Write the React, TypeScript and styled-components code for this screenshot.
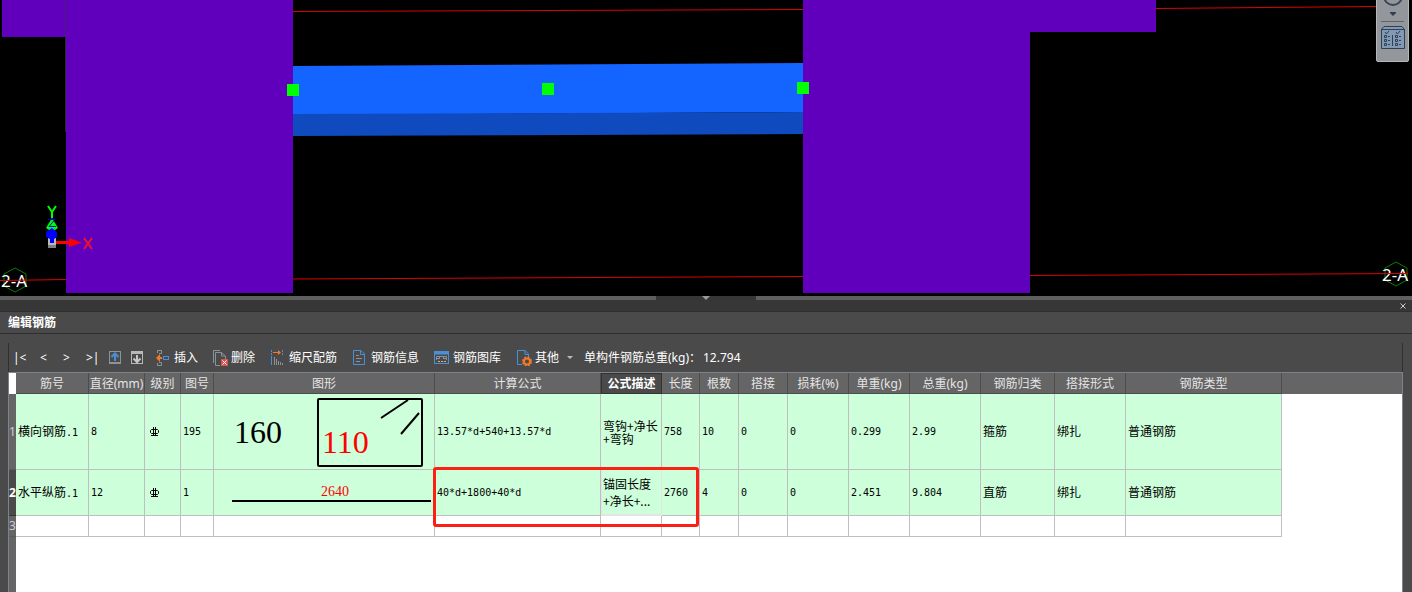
import React from 'react';
import styled, { createGlobalStyle, css } from 'styled-components';

const ui = '"Noto Sans", "Noto Sans CJK SC", sans-serif';
const cjk = '"Noto Sans CJK SC", sans-serif';
const mono = '"DejaVu Sans Mono", "Noto Sans CJK SC", monospace';
const serif = '"Liberation Serif", serif';

const GlobalStyle = createGlobalStyle`
  *, *::before, *::after { box-sizing: border-box; }
  body { margin: 0; background: #4a4a4a; font-family: ${ui}; font-size: 12px; }
  button { font: inherit; color: inherit; background: none; border: 0; padding: 0; cursor: pointer; }
`;

const Shell = styled.div`
  display: flex;
  flex-direction: column;
  min-height: 100vh;
  overflow: hidden;
`;

const Viewport = styled.section`
  position: relative;
  height: 296px;
  background: #000;
  overflow: hidden;
`;

const Scene = styled.svg`
  display: block;
  width: 100%;
  height: 100%;
`;

const NavBar = styled.nav`
  position: absolute;
  top: -60px;
  right: 3px;
  width: 33px;
  height: 122px;
  padding-top: 46px;
  display: flex;
  flex-direction: column;
  align-items: center;
  background: #93979c;
  border: 1px solid #b4b8bb;
  border-radius: 2px;
`;

const NavButton = styled.button<{ $h: number }>`
  display: flex;
  height: ${p => p.$h}px;
  align-items: center;
`;

const NavRule = styled.hr`
  width: 23px;
  height: 1px;
  margin: 0 0 4px;
  border: 0;
  background: #5f6266;
`;

const Splitter = styled.div`
  height: 4px;
  display: flex;
  background: #5f5f5f;
`;

const SplitterGrip = styled.button`
  width: 100px;
  height: 4px;
  margin: 0 auto;
  display: flex;
  justify-content: center;
  background: #363636;
`;

const DockBar = styled.div`
  height: 12px;
  display: flex;
  justify-content: flex-end;
  align-items: center;
  padding-right: 6px;
  background: #373737;
  border-bottom: 1px solid #2f2f2f;
`;

const CloseButton = styled.button`
  display: flex;
`;

const PanelTitle = styled.h2`
  height: 22px;
  margin: 0;
  padding-left: 8px;
  font: 700 12px/20px ${cjk};
  color: #fff;
  border-bottom: 1px solid #2f2f2f;
`;

const PanelBody = styled.div`
  flex: 1;
  display: flex;
  flex-direction: column;
  margin: 9px 9px 0 8px;
`;

const Toolbar = styled.div`
  height: 29px;
  display: flex;
  align-items: center;
  padding-left: 4px;
  border-left: 1px solid #303030;
  border-right: 1px solid #303030;
  color: #fff;
  line-height: 16px;
  white-space: nowrap;
`;

const StepButton = styled.button<{ $w: number }>`
  display: flex;
  width: ${p => p.$w}px;
`;

const ToolButton = styled.button<{ $w: number }>`
  width: ${p => p.$w}px;
  display: flex;
  align-items: center;
  gap: 3px;
`;

const Total = styled.output`
  display: flex;
  gap: 2px;
`;

const GridArea = styled.div`
  position: relative;
  flex: 1;
  background: linear-gradient(to right, #656565 7px, #fff 7px);
  border: 1px solid #7d838d;
  border-bottom: 0;
  overflow: hidden;
`;

const Grid = styled.table`
  width: 100%;
  table-layout: fixed;
  border-collapse: separate;
  border-spacing: 0;
`;

const Head = styled.th<{ $active?: boolean }>`
  height: 21px;
  padding: 1px 0 0;
  background: #656565;
  border-right: 1px solid #4c4c4c;
  border-bottom: 1px solid #4c4c4c;
  color: #e4e4e4;
  font: 400 12px/17px ${ui};
  white-space: nowrap;
  text-align: center;
  overflow: hidden;
  ${p => p.$active && css`
    padding: 0;
    background: #4a4a4a;
    border: 1px solid #333;
    color: #fff;
    font-weight: 700;
  `}
`;

const HeadRest = styled(Head)`
  border-right: 0;
  border-bottom-color: #656565;
`;

const Corner = styled.td`
  padding: 0;
  background: #fff;
`;

const RowNumber = styled.th<{ $active?: boolean }>`
  padding: 0;
  background: ${p => (p.$active ? '#4a4a4a' : '#656565')};
  color: ${p => (p.$active ? '#fff' : '#c4d0e0')};
  font: ${p => (p.$active ? 700 : 400)} 12px/16px ${ui};
  text-align: center;
  border-bottom: 1px solid ${p => (p.$active ? '#333' : '#5a5a5a')};
`;

const Row = styled.tr<{ $h: number }>`
  height: ${p => p.$h}px;
`;

const Cell = styled.td<{ $filled: boolean; $picture?: boolean; $focus?: boolean }>`
  padding: ${p => (p.$picture ? '0' : '0 0 0 2px')};
  background: ${p => (p.$filled ? '#ccffda' : '#fff')};
  border-right: 1px solid #bfbfbf;
  border-bottom: 1px solid #bfbfbf;
  color: #000;
  font: 10px/12px ${mono};
  white-space: nowrap;
  overflow: hidden;
  ${p => p.$focus && css`
    padding-left: 1px;
    border-left: 1px solid #e4e4e4;
    border-right: 1px solid #e4e4e4;
    border-bottom: 2px solid #e4e4e4;
  `}
`;

const Han = styled.span`
  font: 12px/12px ${cjk};
`;

const Lines = styled.div<{ $lh: number }>`
  font: 12px/${p => p.$lh}px ${cjk};
`;

const Shape = styled.svg`
  display: block;
`;

const Highlight = styled.div`
  position: absolute;
  left: 424px;
  top: 94px;
  width: 266px;
  height: 60px;
  border: 3px solid #fc2014;
  border-radius: 3px;
  pointer-events: none;
`;

const columns: [string, number][] = [
  ['筋号', 73], ['直径(mm)', 56], ['级别', 36], ['图号', 33], ['图形', 221], ['计算公式', 166],
  ['公式描述', 61], ['长度', 38], ['根数', 39], ['搭接', 49], ['损耗(%)', 61], ['单重(kg)', 61],
  ['总重(kg)', 71], ['钢筋归类', 74], ['搭接形式', 71], ['钢筋类型', 156],
];

const Grade = () => (
  <Shape width="16" height="12" viewBox="0 0 16 12" stroke="#000" fill="none" aria-label="HRB400" role="img">
    <path d="M4.500 3.500H10.500L11.500 4.500V6.500L10.500 7.500H4.500L3.500 6.500V4.500ZM6.500 1V10M8.500 1V10M4 9.500H11" />
  </Shape>
);

const StirrupShape = () => (
  <Shape width="220" height="75" viewBox="214 394 220 75" fill="none" stroke="#000" strokeWidth="2">
    <rect x="318" y="399" width="104" height="67" rx="1" />
    <path d="M381 418L408 400M401 434L419 413" />
    <text x="234" y="443" fontFamily={serif} fontSize="32" fill="#000" stroke="none">160</text>
    <text x="322" y="453" fontFamily={serif} fontSize="32" fill="#f00" stroke="none">110</text>
  </Shape>
);

const StraightShape = () => (
  <Shape width="220" height="45" viewBox="214 470 220 45" fill="none">
    <path d="M232 501H431" stroke="#000" strokeWidth="2" />
    <text x="321" y="496" fontFamily={serif} fontSize="14" fill="#f00">2640</text>
  </Shape>
);

const rows: { h: number; active?: boolean; cells: React.ReactNode[] }[] = [
  {
    h: 76,
    cells: [
      <><Han>横向钢筋</Han>.1</>, '8', <Grade />, '195', <StirrupShape />, '13.57*d+540+13.57*d',
      <Lines $lh={13}>弯钩+净长<br />+弯钩</Lines>, '758', '10', '0', '0', '0.299', '2.99',
      <Han>箍筋</Han>, <Han>绑扎</Han>, <Han>普通钢筋</Han>,
    ],
  },
  {
    h: 46,
    active: true,
    cells: [
      <><Han>水平纵筋</Han>.1</>, '12', <Grade />, '1', <StraightShape />, '40*d+1800+40*d',
      <Lines $lh={17}>锚固长度<br />+净长+...</Lines>, '2760', '4', '0', '0', '2.451', '9.804',
      <Han>直筋</Han>, <Han>绑扎</Han>, <Han>普通钢筋</Han>,
    ],
  },
  { h: 21, cells: columns.map(() => '') },
];

const Icon = ({ children }: { children: React.ReactNode }) => (
  <svg width="16" height="16" viewBox="0 0 16 16" fill="none" strokeWidth="1" aria-hidden="true">{children}</svg>
);

const BLUE = '#4a90d9';
const GREY = '#8a939b';
const ORANGE = '#f0792b';

const UpIcon = () => (
  <Icon>
    <rect x="2.500" y="1.500" width="11" height="12" stroke={GREY} />
    <path d="M2 13H14" stroke={GREY} strokeWidth="2" />
    <path d="M8 3V11M4.500 7L8 3.500L11.500 7" stroke={BLUE} strokeWidth="2" />
  </Icon>
);
const DownIcon = () => (
  <Icon>
    <rect x="2.500" y="1.500" width="11" height="12" stroke="#b8b8b8" />
    <path d="M2 2.500H14" stroke="#b8b8b8" strokeWidth="3" />
    <path d="M8 5V12M4.500 8.500L8 12L11.500 8.500" stroke="#c8c8c8" strokeWidth="2" />
  </Icon>
);
const InsertIcon = () => (
  <Icon>
    <path d="M2.500 3V.500H6.500V3.500H4M2.500 13V15.500H6.500V12.500H4" stroke={GREY} />
    <path d="M1 8L5 4V12ZM4 7H7V9H4Z" fill={ORANGE} />
    <rect x="8.500" y="6.500" width="5" height="3" stroke={BLUE} />
  </Icon>
);
const DeleteIcon = () => (
  <Icon>
    <path d="M1.500 13V.500H8M8 15.500H3.500V2.500H9.500L13.500 6V9M9.500 2.500V6H13" stroke={GREY} />
    <rect x="9" y="9" width="7" height="7" fill="#d9534f" />
    <path d="M10.500 10.500L14.500 14.500M14.500 10.500L10.500 14.500" stroke="#fff" />
  </Icon>
);
const ScaleIcon = () => (
  <Icon>
    <path d="M1.500 0V5M12.500 0V5" stroke={BLUE} strokeDasharray="2 1" />
    <path d="M3 2.500H9" stroke={ORANGE} />
    <path d="M8 0V5L11 2.500Z" fill={ORANGE} />
    <path d="M1.500 6V15" stroke={BLUE} />
    <path d="M4.500 7V15M6.500 9V15M8.500 11V15M10.500 12V15M12.500 13V15" stroke={GREY} />
  </Icon>
);
const InfoIcon = () => (
  <Icon>
    <path d="M1.500 .500H9L12.500 4V14.500H1.500ZM8.500 .500V4.500H12.500" stroke={BLUE} />
    <path d="M4 5.500H7M4 8.500H10M4 11.500H8" stroke={GREY} />
  </Icon>
);
const LibraryIcon = () => (
  <Icon>
    <rect x=".500" y="1.500" width="14" height="12" stroke={BLUE} />
    <path d="M0 3H15" stroke={BLUE} strokeWidth="3" />
    <path d="M2.500 10V6.500H12.500V10M3 8.500H6M9 8.500H12M5.500 6V9M9.500 6V9" stroke={GREY} />
    <path d="M4 11.500H13" stroke="#e0b080" strokeDasharray="2 1" />
  </Icon>
);
const OtherIcon = () => (
  <Icon>
    <path d="M6 14.500H1.500V.500H9L12.500 4V7M9 .500V4.500H12" stroke={BLUE} />
    <circle cx="11" cy="11.500" r="3" stroke={ORANGE} strokeWidth="2" />
    <circle cx="11" cy="11.500" r="4" stroke={ORANGE} strokeWidth="2" strokeDasharray="2 1.140" />
  </Icon>
);

const GreenHandle = ({ x, y }: { x: number; y: number }) => (
  <rect x={x} y={y} width="12" height="12" fill="#0f0" />
);

const AxisMark = ({ x, y }: { x: number; y: number }) => (
  <path d={`M${x} ${y - 12}L${x + 11} ${y - 6}V${y + 6}L${x} ${y + 12}L${x - 11} ${y + 6}V${y - 6}Z`} stroke="#0b7a0b" fill="none" />
);

export default function App() {
  return (
    <Shell>
      <GlobalStyle />
      <Viewport aria-label="模型视图">
        <Scene viewBox="0 0 1412 296" preserveAspectRatio="xMidYMid slice">
          <g fill="#6000bc">
            <path d="M2 0H293V293H66V37H2Z" />
            <path d="M803 0H1156V32H1030V293H803Z" />
          </g>
          <path d="M65.500 0V37" stroke="#4a1a80" />
          <path d="M65.500 37V132" stroke="#2c2c2c" />
          <path d="M293 66L803 63V112L293 115Z" fill="#1464ff" />
          <path d="M293 114L803 112V134L293 136Z" fill="#0f4bbf" />
          <GreenHandle x={287} y={84} />
          <GreenHandle x={542} y={83} />
          <GreenHandle x={797} y={82} />
          <AxisMark x={15} y={280} />
          <AxisMark x={1396} y={274} />
          <g fontFamily={ui} fontSize="17" fill="#fff">
            <text x="1" y="287">2-A</text>
            <text x="1382" y="281">2-A</text>
          </g>
          <path
            d="M293 11.500L803 9.500M1156 8.500L1376 6.500M0 280.500L66 279.500M293 279L803 276.500M1030 275.500L1408 273.500"
            stroke="#e00000"
            fill="none"
          />
          <rect x="48" y="238" width="8" height="10" fill="#b9b9b9" />
          <path d="M48 245H56V248H48Z" fill="#808080" />
          <path d="M56 242.500H72" stroke="#f00" strokeWidth="3" />
          <path d="M69 238L82 242.500L69 247Z" fill="#f00" />
          <path d="M52 218L58 228L55 230H49L46 228Z" fill="#0f0" />
          <path d="M52 228L57 232V237L54 239V243H50V239L46 237V232Z" fill="#00f" />
          <g fill="none" strokeWidth="1">
            <path d="M48 206L52 212L56 206M52 212V218" stroke="#0f0" strokeWidth="2" />
            <path d="M48 219.500H55L49 226.500H56" stroke="#00f" />
            <path d="M84 238L92 249M92 238L84 249" stroke="#f01030" strokeWidth="2" />
          </g>
        </Scene>
        <NavBar aria-label="视图工具">
          <NavButton $h={20} aria-label="动态观察">
            <svg width="22" height="20" viewBox="0 0 22 20" fill="none"><circle cx="11" cy="9" r="9" stroke="#3a4656" strokeWidth="2" /></svg>
          </NavButton>
          <NavButton $h={14} aria-label="更多">
            <svg width="8" height="4" viewBox="0 0 8 4"><path d="M1 0H7V1L4 4L1 1Z" fill="#2f3d55" /></svg>
          </NavButton>
          <NavRule />
          <NavButton $h={24} aria-label="显示设置">
            <svg width="24" height="24" viewBox="0 0 24 24" fill="none" stroke="#2f3f55">
              <path d="M.500 3.500L3 .500H21L23.500 3.500V22.500H.500Z" fill="#8299b3" />
              <path d="M0 3.500H24M11.500 9V20" />
              <path d="M4 6L5.500 8L8 5M15 6L16.500 8L19 5" />
              <path d="M3.500 9.500h2v2h-2zM3.500 13.500h2v2h-2zM3.500 17.500h2v2h-2zM14.500 9.500h2v2h-2zM14.500 13.500h2v2h-2zM14.500 17.500h2v2h-2zM7 10.500h2M7 14.500h2M7 18.500h2M18 10.500h2M18 14.500h2M18 18.500h2" />
            </svg>
          </NavButton>
        </NavBar>
      </Viewport>
      <Splitter>
        <SplitterGrip aria-label="收起面板">
          <svg width="8" height="4" viewBox="0 0 8 4"><path d="M0 0H8L4 4Z" fill="#999" /></svg>
        </SplitterGrip>
      </Splitter>
      <DockBar>
        <CloseButton aria-label="关闭">
          <svg width="6" height="6" viewBox="0 0 6 6"><path d="M.500 .500L5.500 5.500M5.500 .500L.500 5.500" stroke="#ccc" strokeWidth="1" /></svg>
        </CloseButton>
      </DockBar>
      <PanelTitle>编辑钢筋</PanelTitle>
      <PanelBody>
        <Toolbar role="toolbar">
          <StepButton $w={27} aria-label="第一条">|&lt;</StepButton>
          <StepButton $w={23} aria-label="上一条">&lt;</StepButton>
          <StepButton $w={23} aria-label="下一条">&gt;</StepButton>
          <StepButton $w={21} aria-label="最后一条">&gt;|</StepButton>
          <ToolButton $w={22} aria-label="上移"><UpIcon /></ToolButton>
          <ToolButton $w={26} aria-label="下移"><DownIcon /></ToolButton>
          <ToolButton $w={57}><InsertIcon />插入</ToolButton>
          <ToolButton $w={58}><DeleteIcon />删除</ToolButton>
          <ToolButton $w={82}><ScaleIcon />缩尺配筋</ToolButton>
          <ToolButton $w={82}><InfoIcon />钢筋信息</ToolButton>
          <ToolButton $w={82}><LibraryIcon />钢筋图库</ToolButton>
          <ToolButton $w={68}>
            <OtherIcon />其他
            <svg width="12" height="4" viewBox="0 0 12 4" aria-hidden="true"><path d="M5 0H11L8 3Z" fill="#bbb" /></svg>
          </ToolButton>
          <Total><span>单构件钢筋总重(kg)：</span><span>12.794</span></Total>
        </Toolbar>
        <GridArea>
          <Grid>
            <colgroup>
              <col width={7} />
              {columns.map(([name, w]) => <col key={name} width={w} />)}
              <col />
            </colgroup>
            <thead>
              <tr>
                <Corner />
                {columns.map(([name]) => <Head key={name} scope="col" $active={name === '公式描述'}>{name}</Head>)}
                <HeadRest as="td" />
              </tr>
            </thead>
            <tbody>
              {rows.map((row, r) => (
                <Row key={r} $h={row.h}>
                  <RowNumber scope="row" $active={row.active}>{r + 1}</RowNumber>
                  {row.cells.map((cell, c) => (
                    <Cell key={c} $filled={r < 2} $picture={c === 4} $focus={row.active && c === 6}>{cell}</Cell>
                  ))}
                  <td />
                </Row>
              ))}
            </tbody>
          </Grid>
          <Highlight />
        </GridArea>
      </PanelBody>
    </Shell>
  );
}
